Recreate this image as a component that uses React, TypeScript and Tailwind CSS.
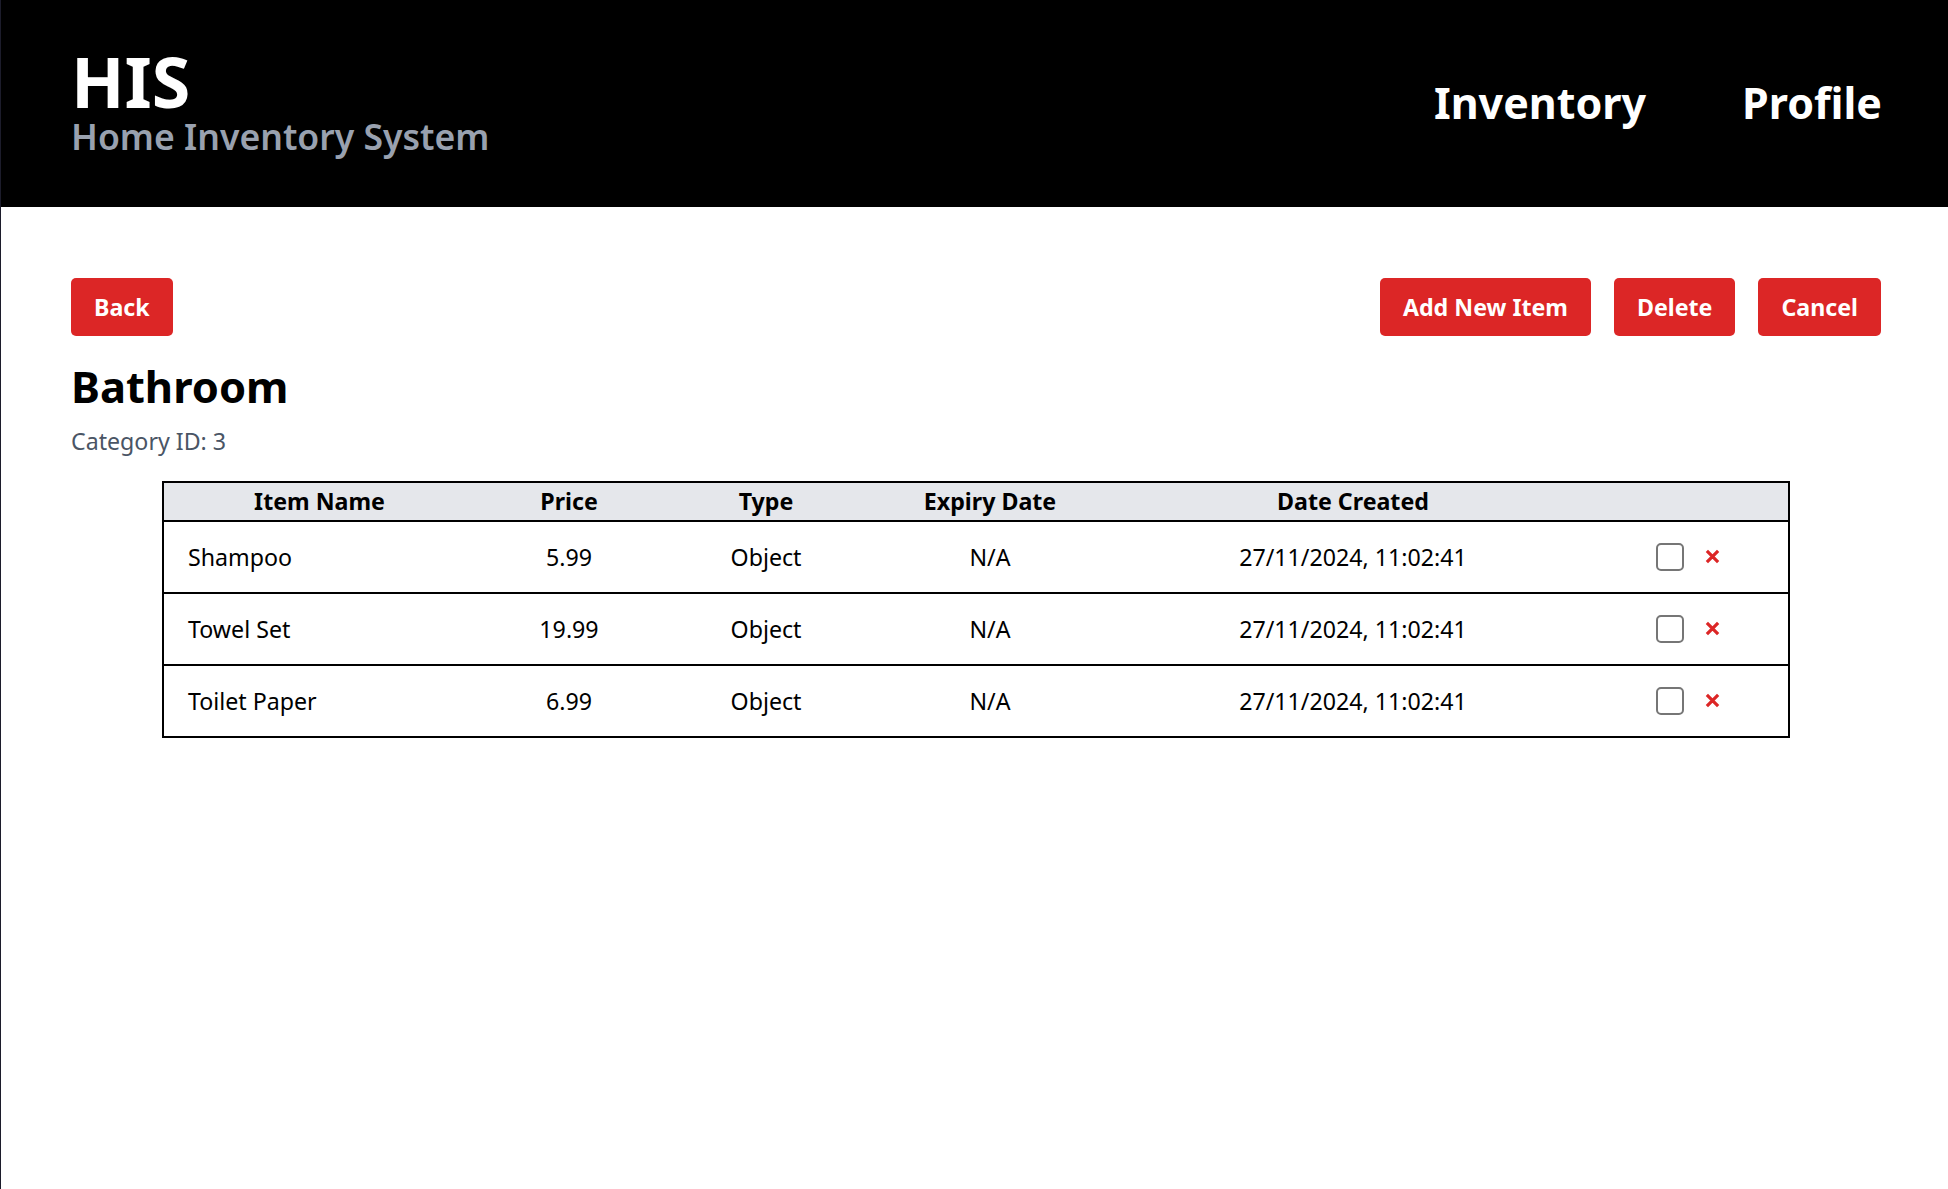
import React, { useState } from 'react'

type Item = {
    id: number;
    name: string;
    price: string;
    type: string;
    expiry: string;
    created: string;
}

const initialItems: Item[] = [
    { id: 1, name: 'Shampoo', price: '5.99', type: 'Object', expiry: 'N/A', created: '27/11/2024, 11:02:41' },
    { id: 2, name: 'Towel Set', price: '19.99', type: 'Object', expiry: 'N/A', created: '27/11/2024, 11:02:41' },
    { id: 3, name: 'Toilet Paper', price: '6.99', type: 'Object', expiry: 'N/A', created: '27/11/2024, 11:02:41' },
];

const RedButton = ({ label }: { label: string }) => (
    <button className="h-[58px] px-[23px] bg-[#dc2626] text-white font-bold text-[23.2px] rounded-[5px]">
        {label}
    </button>
)

const App = () => {
    const [items, setItems] = useState<Item[]>(initialItems);
    const [selected, setSelected] = useState<number[]>([]);

    const toggle = (id: number) => {
        setSelected((prev) => prev.includes(id) ? prev.filter((x) => x !== id) : [...prev, id]);
    }

    const removeItem = (id: number) => {
        setItems((prev) => prev.filter((i) => i.id !== id));
    }

    return (
        <div className="min-h-screen bg-white border-l border-[#1c1c2b] font-['Noto_Sans',sans-serif]">
            {/* header */}
            <header className="bg-black h-[207px] flex items-start justify-between pl-[70px] pr-[66px]">
                <div className="pt-[46px]">
                    <h1 className="text-white font-bold text-[70px] leading-none">HIS</h1>
                    <p className="text-gray-400 font-semibold text-[35.6px] leading-[40px]">Home Inventory System</p>
                </div>
                <nav className="pt-[71px] flex gap-[96px] text-white font-bold text-[43px] leading-[1.5]">
                    <a>Inventory</a>
                    <a>Profile</a>
                </nav>
            </header>

            <main className="pl-[70px] pr-[67px] pt-[71px]">
                <div className="flex items-center justify-between">
                    <RedButton label="Back" />
                    <div className="flex gap-[23px]">
                        <RedButton label="Add New Item" />
                        <RedButton label="Delete" />
                        <RedButton label="Cancel" />
                    </div>
                </div>

                <h2 className="mt-[24px] text-black font-bold text-[43.5px] leading-[1.2]">Bathroom</h2>
                <p className="mt-[12px] text-gray-600 text-[23.2px] leading-[1.5]">Category ID: 3</p>

                <table className="mt-[22px] mx-auto w-[1626px] border-collapse border-2 border-black text-[23.2px] text-black table-fixed">
                    <colgroup>
                        <col className="w-[312px]" />
                        <col className="w-[188px]" />
                        <col className="w-[206px]" />
                        <col className="w-[242px]" />
                        <col className="w-[484px]" />
                        <col className="w-[194px]" />
                    </colgroup>
                    <thead>
                        <tr className="bg-gray-200 border-b-2 border-black">
                            <th className="h-[39px] p-0 font-bold">Item Name</th>
                            <th className="h-[39px] p-0 font-bold">Price</th>
                            <th className="h-[39px] p-0 font-bold">Type</th>
                            <th className="h-[39px] p-0 font-bold">Expiry Date</th>
                            <th className="h-[39px] p-0 font-bold">Date Created</th>
                            <th className="h-[39px] p-0"></th>
                        </tr>
                    </thead>
                    <tbody>
                        {items.map((item) => (
                            <tr key={item.id} className="border-b-2 border-black">
                                <td className="h-[72px] pl-[24px] text-left">{item.name}</td>
                                <td className="h-[72px] text-center">{item.price}</td>
                                <td className="h-[72px] text-center">{item.type}</td>
                                <td className="h-[72px] text-center">{item.expiry}</td>
                                <td className="h-[72px] text-center">{item.created}</td>
                                <td className="h-[72px] pr-[8px]">
                                    <div className="flex items-center justify-center gap-[21px]">
                                        <input
                                            type="checkbox"
                                            checked={selected.includes(item.id)}
                                            onChange={() => toggle(item.id)}
                                            className="appearance-none w-[28px] h-[28px] border-2 border-[#767676] rounded-[5px] bg-white cursor-pointer"
                                        />
                                        <button onClick={() => removeItem(item.id)} className="text-[#dc2626]">
                                            <svg width="15" height="15" viewBox="0 0 16 16">
                                                <path d="M2 2 L14 14 M14 2 L2 14" stroke="currentColor" strokeWidth="3.4" strokeLinecap="butt" />
                                            </svg>
                                        </button>
                                    </div>
                                </td>
                            </tr>
                        ))}
                    </tbody>
                </table>
            </main>
        </div>
    )
}

export default App
